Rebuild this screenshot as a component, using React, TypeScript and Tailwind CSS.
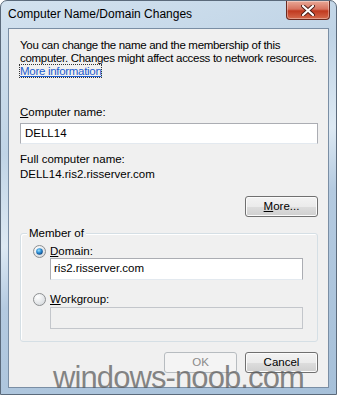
import React from "react";

const font = { fontFamily: '"Liberation Sans", Arial, sans-serif' };

function Radio({ checked }: { checked?: boolean }) {
  return (
    <svg width="13" height="13" viewBox="0 0 13 13" className="shrink-0">
      <defs>
        <radialGradient id="rbg" cx="0.35" cy="0.3" r="0.8">
          <stop offset="0" stopColor="#ffffff" />
          <stop offset="1" stopColor="#d4d8dc" />
        </radialGradient>
        <radialGradient id="rdot" cx="0.4" cy="0.35" r="0.7">
          <stop offset="0" stopColor="#9ee2fb" />
          <stop offset="0.5" stopColor="#2b8ed6" />
          <stop offset="1" stopColor="#0c3e78" />
        </radialGradient>
      </defs>
      <circle cx="6.5" cy="6.5" r="6" fill="url(#rbg)" stroke="#8d8f91" strokeWidth="1" />
      {checked && <circle cx="6.5" cy="6.5" r="3.3" fill="url(#rdot)" />}
    </svg>
  );
}

function Button({ children, disabled }: { children: React.ReactNode; disabled?: boolean }) {
  return (
    <div
      className={
        disabled
          ? "flex h-[21px] w-[73px] items-center justify-center rounded-[3px] border border-[#b7bcc0] bg-[#f4f4f4] text-[#8a8a8a]"
          : "flex h-[21px] w-[73px] items-center justify-center rounded-[3px] border border-[#707070] bg-[linear-gradient(#f3f3f3_0%,#ebebeb_50%,#dddddd_51%,#cfcfcf_100%)] text-black shadow-[inset_0_0_0_1px_#fbfbfb]"
      }
    >
      {children}
    </div>
  );
}

export default function App() {
  return (
    <div
      className="relative h-[395px] w-[337px] overflow-hidden rounded-t-[7px] border border-[#5b6a7b] bg-[linear-gradient(160deg,#d3e2ef_0%,#c0d4e6_30%,#dde9f3_48%,#b4cae0_60%,#a6c0d9_100%)]"
      style={font}
    >
      {/* title bar */}
      <div className="flex h-[27px] items-start pl-[7px] pt-[6px] text-[12px] leading-[15px] text-black">
        Computer Name/Domain Changes
      </div>
      <div className="absolute right-[6px] top-0 flex h-[19px] w-[44px] items-center justify-center rounded-b-[4px] border border-t-0 border-[#6a2a20] bg-[linear-gradient(#e9a897_0%,#d7735f_45%,#c0391f_55%,#d56a4d_100%)] shadow-[inset_0_0_0_1px_rgba(255,255,255,0.35)]">
        <svg width="14" height="11" viewBox="0 0 14 11">
          <path d="M2 1 L12 10 M12 1 L2 10" stroke="#4a1d17" strokeWidth="4" strokeLinecap="round" />
          <path d="M2 1 L12 10 M12 1 L2 10" stroke="#ffffff" strokeWidth="2.2" strokeLinecap="round" />
        </svg>
      </div>

      {/* client area */}
      <div className="mx-[7px] flex h-[360px] flex-col border border-[#7a8ea4] bg-[#f0f0f0] pl-[11px] pr-[10px] pt-[10px] text-[11.5px] text-black">
        <p className="whitespace-nowrap leading-[13px] tracking-[-0.3px]">
          You can change the name and the membership of this
          <br />
          computer. Changes might affect access to network resources.
          <br />
          <span className="text-[#1c5ccf] underline outline outline-1 outline-dotted outline-[#333]">
            More information
          </span>
        </p>

        <div className="mt-[27px] leading-[15px]">
          <span className="underline">C</span>omputer name:
        </div>
        <div className="mt-[3px] flex h-[21px] items-center border border-[#abadb3] border-b-[#e3e9ef] bg-white pl-[4px] leading-[15px]">
          DELL14
        </div>

        <div className="mt-[8px] leading-[15px]">Full computer name:</div>
        <div className="leading-[15px]">DELL14.ris2.risserver.com</div>

        <div className="mt-[14px] self-end">
          <Button>
            <span className="underline">M</span>ore...
          </Button>
        </div>

        {/* group box */}
        <div className="relative mt-[16px] rounded-[3px] border border-[#d5dfe5] pb-[12px] pl-[12px] pr-[14px] pt-[10px] shadow-[inset_1px_1px_0_#ffffff]">
          <div className="absolute -top-[8px] left-[6px] bg-[#f0f0f0] px-[2px] leading-[15px]">
            Member of
          </div>
          <div className="flex items-center gap-[4px] leading-[14px]">
            <Radio checked />
            <span>
              <span className="underline">D</span>omain:
            </span>
          </div>
          <div className="ml-[17px] flex h-[22px] items-center border border-[#abadb3] border-b-[#e3e9ef] bg-white pl-[3px]">
            ris2.risserver.com
          </div>
          <div className="mt-[12px] flex items-center gap-[4px] leading-[14px]">
            <Radio />
            <span>
              <span className="underline">W</span>orkgroup:
            </span>
          </div>
          <div className="ml-[17px] mt-[1px] h-[22px] border border-[#c3c6cb] bg-[#f0f0f0]" />
        </div>

        <div className="mt-[10px] flex justify-end gap-[8px]">
          <Button disabled>OK</Button>
          <Button>Cancel</Button>
        </div>
      </div>

      {/* watermark */}
      <div className="pointer-events-none absolute left-[52px] top-[360px] text-[31px] leading-[34px] tracking-[-0.9px] text-[#5f5f5f]/75">
        windows-noob.com
      </div>
    </div>
  );
}
